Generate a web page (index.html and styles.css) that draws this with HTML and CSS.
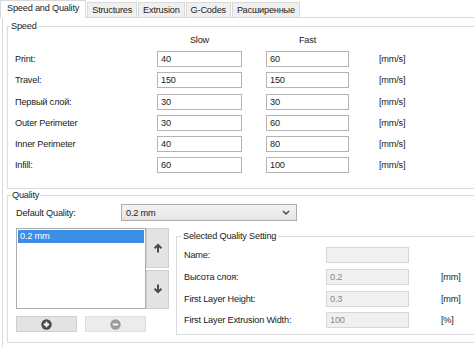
FILE: index.html
```html
<!DOCTYPE html>
<html lang="en">
<head>
    <meta charset="UTF-8">
    <title>Speed and Quality</title>
    <link rel="stylesheet" href="styles.css">
</head>
<body>
    <div class="tabs">
        <div class="tab active">Speed and Quality</div>
        <div class="tab">Structures</div>
        <div class="tab">Extrusion</div>
        <div class="tab">G-Codes</div>
        <div class="tab">Расширенные</div>
    </div>

    <div class="page">
        <fieldset class="group speed">
            <legend>Speed</legend>
            <div class="speed-grid">
                <span></span><span class="head">Slow</span><span class="head">Fast</span><span></span>

                <label>Print:</label>
                <input class="field" value="40"><input class="field" value="60">
                <span class="unit">[mm/s]</span>

                <label>Travel:</label>
                <input class="field" value="150"><input class="field" value="150">
                <span class="unit">[mm/s]</span>

                <label>Первый слой:</label>
                <input class="field" value="30"><input class="field" value="30">
                <span class="unit">[mm/s]</span>

                <label>Outer Perimeter</label>
                <input class="field" value="30"><input class="field" value="60">
                <span class="unit">[mm/s]</span>

                <label>Inner Perimeter</label>
                <input class="field" value="40"><input class="field" value="80">
                <span class="unit">[mm/s]</span>

                <label>Infill:</label>
                <input class="field" value="60"><input class="field" value="100">
                <span class="unit">[mm/s]</span>
            </div>
        </fieldset>

        <fieldset class="group quality">
            <legend>Quality</legend>
            <div class="default-row">
                <label>Default Quality:</label>
                <div class="select">
                    <span>0.2 mm</span>
                    <svg width="8" height="5" viewBox="0 0 8 5"><path d="M1 1 L4 4 L7 1" fill="none" stroke="#444" stroke-width="1.4"/></svg>
                </div>
            </div>

            <div class="quality-body">
                <div class="list-col">
                    <div class="list-wrap">
                        <div class="listbox">
                            <div class="item selected">0.2 mm</div>
                        </div>
                        <div class="order-btns">
                            <div class="btn order">
                                <svg width="10" height="10" viewBox="0 0 10 10"><path d="M5 9.5 V2 M1.6 5.2 L5 1.8 L8.4 5.2" fill="none" stroke="#4a4a4a" stroke-width="2"/></svg>
                            </div>
                            <div class="btn order">
                                <svg width="10" height="10" viewBox="0 0 10 10"><path d="M5 0.5 V8 M1.6 4.8 L5 8.2 L8.4 4.8" fill="none" stroke="#4a4a4a" stroke-width="2"/></svg>
                            </div>
                        </div>
                    </div>
                    <div class="add-row">
                        <div class="btn add">
                            <svg width="11" height="11" viewBox="0 0 11 11"><circle cx="5.5" cy="5.5" r="5.2" fill="#4a4a4a"/><path d="M5.5 2.8 V8.2 M2.8 5.5 H8.2" stroke="#fff" stroke-width="1.8"/></svg>
                        </div>
                        <div class="btn remove">
                            <svg width="11" height="11" viewBox="0 0 11 11"><circle cx="5.5" cy="5.5" r="5.2" fill="#9c9c9c"/><path d="M2.8 5.5 H8.2" stroke="#fff" stroke-width="1.8"/></svg>
                        </div>
                    </div>
                </div>

                <fieldset class="group setting">
                    <legend>Selected Quality Setting</legend>
                    <div class="setting-grid">
                        <label>Name:</label>
                        <input class="field" disabled value="">
                        <span></span>

                        <label>Высота слоя:</label>
                        <input class="field" disabled value="0.2">
                        <span class="unit">[mm]</span>

                        <label>First Layer Height:</label>
                        <input class="field" disabled value="0.3">
                        <span class="unit">[mm]</span>

                        <label>First Layer Extrusion Width:</label>
                        <input class="field" disabled value="100">
                        <span class="unit">[%]</span>
                    </div>
                </fieldset>
            </div>
        </fieldset>
    </div>
</body>
</html>
```

FILE: styles.css
```css
:root {
    --text: #1b1b1b;
    --line: #dcdcdc;
    --tab-line: #d9d9d9;
    --input-line: #b4b4b4;
}

body {
    margin: 0;
    height: 347px;
    overflow: hidden;
    background: #fff;
    color: var(--text);
    font-family: 'Liberation Sans', Arial, sans-serif;
    font-size: 9.2px;
    letter-spacing: -0.2px;
}

/* tab strip */
.tabs {
    display: flex;
    align-items: flex-end;
    height: 17px;
    padding-left: 2px;
}

.tab {
    height: 14px;
    line-height: 14px;
    padding: 0 4px;
    margin-right: 1px;
    background: #f0f0f0;
    border: 1px solid var(--tab-line);
    border-bottom: none;
    white-space: nowrap;
}

.tab.active {
    position: relative;
    z-index: 1;
    height: 17px;
    line-height: 15px;
    margin: 0 1px -1px -2px;
    padding: 0 6px;
    background: #fff;
}

/* the page runs on past the right edge of the window */
.page {
    height: 329px;
    margin-left: 2px;
    padding: 0 0 0 4px;
    border-top: 1px solid var(--tab-line);
    border-left: 1px solid var(--tab-line);
}

/* group boxes */
.group {
    margin: 0;
    border: 1px solid var(--line);
    border-right: none;
    min-width: 0;
}

.group legend {
    line-height: 11px;
    padding: 0 1px;
    margin-left: -5px;
}

.speed {
    margin-top: 2.5px;
    padding: 3.5px 0 15px 7px;
}

.quality {
    margin-top: 1px;
    padding: 3px 0 7px 8px;
}

/* inputs */
.field {
    box-sizing: border-box;
    height: 16px;
    margin: 0;
    padding: 0 3px;
    border: 1px solid var(--input-line);
    background: #fff;
    font: inherit;
    letter-spacing: inherit;
    color: var(--text);
    outline: none;
}

.field:disabled {
    background: #f0f0f0;
    border-color: #d7d7d7;
    color: #8a8a8a;
}

/* speed table */
.speed-grid {
    display: grid;
    grid-template-columns: 118px 85px 83px auto;
    column-gap: 24px;
    row-gap: 5.2px;
    align-items: center;
}

.speed-grid .field {
    width: 100%;
}

.head {
    text-align: center;
    line-height: 11px;
}

.unit {
    padding-left: 6px;
}

/* quality */
.default-row {
    display: flex;
    align-items: center;
}

.default-row label {
    width: 105px;
}

.select {
    box-sizing: border-box;
    width: 176px;
    height: 17px;
    display: flex;
    align-items: center;
    justify-content: space-between;
    padding: 0 6px 0 4px;
    border: 1px solid #acacac;
    background: linear-gradient(#f2f2f2, #e5e5e5);
}

.quality-body {
    display: flex;
    align-items: flex-start;
    margin-top: 7px;
}

.list-col {
    display: flex;
    flex-direction: column;
    gap: 7px;
}

.list-wrap {
    display: flex;
}

.listbox {
    box-sizing: border-box;
    width: 130px;
    height: 81px;
    padding: 1px;
    border: 1px solid #abadb3;
    background: #fff;
}

.item {
    height: 13px;
    line-height: 13px;
    padding-left: 2px;
}

.item.selected {
    background: #3c8fe6;
    color: #fff;
}

.order-btns {
    display: flex;
    flex-direction: column;
    gap: 2px;
}

.btn {
    box-sizing: border-box;
    display: flex;
    align-items: center;
    justify-content: center;
    background: #e3e3e3;
    border: 1px solid #cfcfcf;
}

.btn.order {
    width: 23px;
    height: 39.5px;
}

.add-row {
    display: flex;
    gap: 8px;
}

.btn.add,
.btn.remove {
    width: 61px;
    height: 16px;
}

.btn.remove {
    background: #ececec;
    border-color: #dedede;
}

/* selected quality setting */
.setting {
    flex: 1;
    margin: 3px 0 0 7px;
    padding: 5px 0 6px 7px;
}

.setting legend {
    margin-left: -2px;
}

.setting-grid {
    display: grid;
    grid-template-columns: 142px 83px auto;
    row-gap: 5.7px;
    align-items: center;
}

.setting-grid .field {
    width: 100%;
}

.setting-grid .unit {
    padding-left: 32px;
}
```
